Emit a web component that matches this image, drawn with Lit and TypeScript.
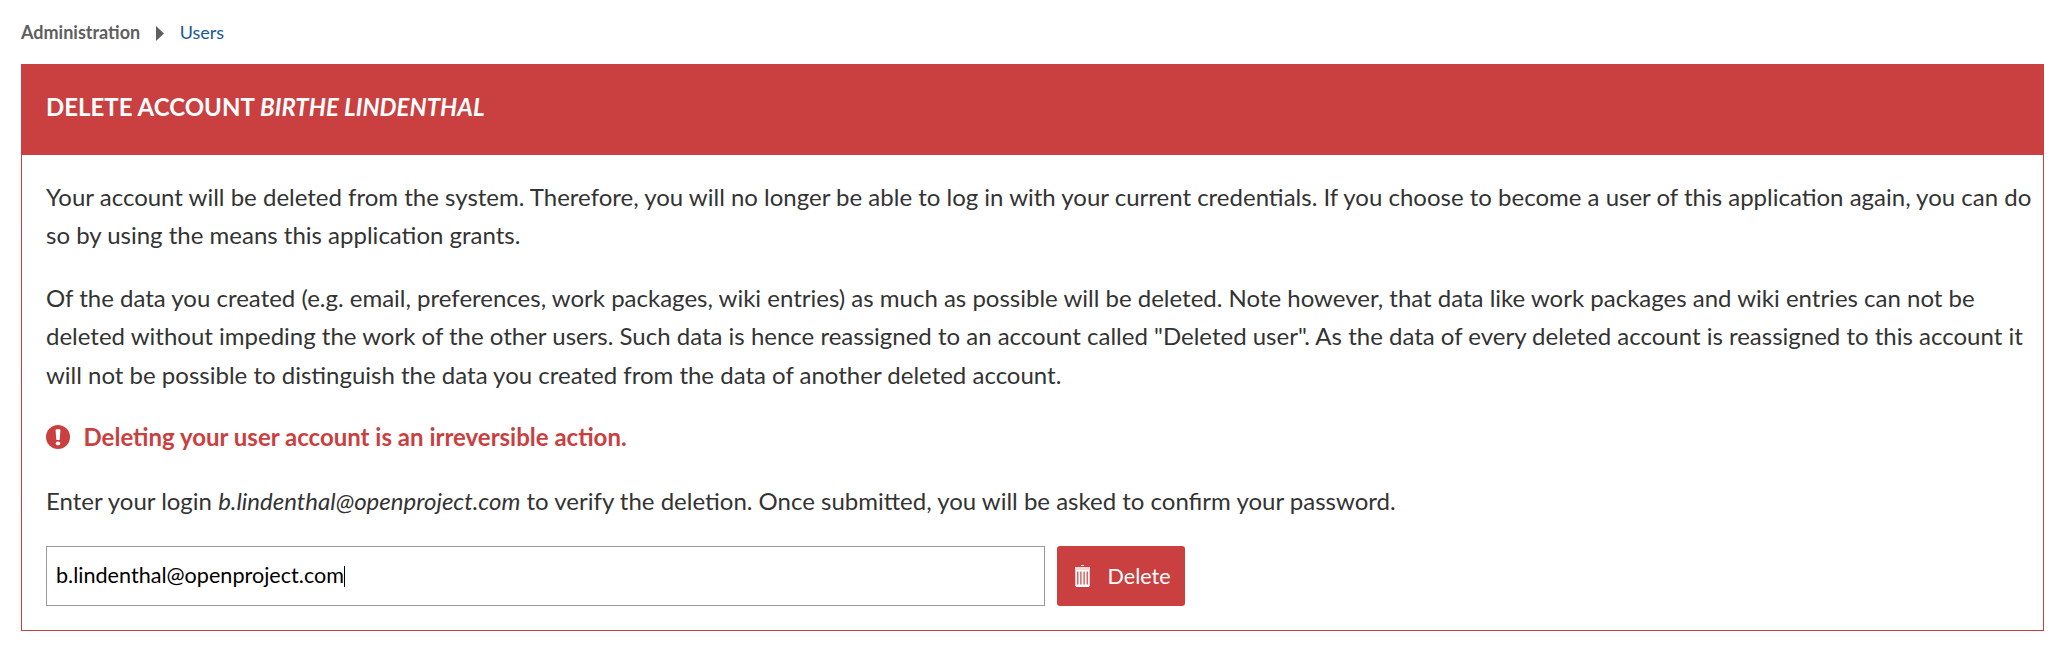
import { LitElement, html, css } from "lit";
import { customElement, property } from "lit/decorators.js";

@customElement("app-breadcrumb")
class AppBreadcrumb extends LitElement {
  static styles = css`
    :host { display: block; }
    .trail { display: flex; align-items: center; height: 24px; font-size: 18px; line-height: 24px; white-space: nowrap; }
    .root { color: #5f5f5f; font-weight: 700; }
    .arrow { width: 8px; height: 15px; margin: 2px 15.5px 0 16px; fill: #5f5f5f; }
    .link { color: #175a8e; text-decoration: none; }
  `;
  render() {
    return html`<nav class="trail">
      <span class="root">Administration</span>
      <svg class="arrow" viewBox="0 0 8 15"><path d="M0 0L8 7.5L0 15Z" /></svg>
      <a class="link">Users</a>
    </nav>`;
  }
}

@customElement("delete-account")
class DeleteAccount extends LitElement {
  @property() name = "Birthe Lindenthal";
  @property() login = "b.lindenthal@openproject.com";

  static styles = css`
    :host { display: block; }
    .panel { box-sizing: border-box; height: 567px; border: 1px solid #ca3f3f; background: #fff; }
    .header { box-sizing: border-box; height: 90px; padding: 23px 24px 0; background: #ca3f3f; color: #fff; }
    .title { margin: 0; font-size: 24px; line-height: 38px; font-weight: 700; text-transform: uppercase; white-space: nowrap; }
    .body { padding: 23px 0 0 24px; }
    .text { margin: 0 0 24px; font-size: 24px; line-height: 38.4px; color: #333; white-space: nowrap; }
    .text.prompt { margin-bottom: 25.2px; }
    .warning { display: flex; align-items: center; gap: 13.5px; margin-bottom: 26px; font-size: 24px; line-height: 38.4px; font-weight: 700; color: #ca3f3f; }
    .mark { width: 24px; height: 24px; }
    .form { display: flex; gap: 12px; height: 60px; }
    .field { box-sizing: border-box; display: flex; align-items: center; width: 999px; padding: 0 9px 2px; border: 1px solid #999; color: #000; font-size: 21.6px; line-height: 30px; }
    .caret { width: 1px; height: 21px; margin-top: 2px; background: #000; }
    .button { box-sizing: border-box; display: flex; align-items: center; width: 128px; padding: 0 0 0 18px; gap: 17.5px; border: 0; border-radius: 3px; background: #ca3f3f; color: #fff; font: 400 21.6px/30px Lato, sans-serif; }
    .bin { width: 15px; height: 22px; flex: none; }
  `;

  render() {
    return html`<section class="panel">
      <div class="header"><h3 class="title">Delete account <em>${this.name}</em></h3></div>
      <div class="body">
        <p class="text">Your account will be deleted from the system. Therefore, you will no longer be able to log in with your current credentials. If you choose to become a user of this application again, you can do<br />so by using the means this application grants.</p>
        <p class="text">Of the data you created (e.g. email, preferences, work packages, wiki entries) as much as possible will be deleted. Note however, that data like work packages and wiki entries can not be<br />deleted without impeding the work of the other users. Such data is hence reassigned to an account called "Deleted user". As the data of every deleted account is reassigned to this account it<br />will not be possible to distinguish the data you created from the data of another deleted account.</p>
        <div class="warning">
          <svg class="mark" viewBox="0 0 24 24"><circle cx="12" cy="12" r="12" fill="#ca3f3f" /><path d="M9.6 5.2q0-1 1-1h2.8q1 0 1 1l-.6 9q0 .8-.8.8h-2q-.8 0-.8-.8z" fill="#fff" /><ellipse cx="12" cy="18.4" rx="2.3" ry="1.9" fill="#fff" /></svg>
          <span>Deleting your user account is an irreversible action.</span>
        </div>
        <p class="text prompt">Enter your login <em>${this.login}</em> to verify the deletion. Once submitted, you will be asked to confirm your password.</p>
        <div class="form">
          <div class="field"><span>${this.login}</span><span class="caret"></span></div>
          <button class="button">
            <svg class="bin" viewBox="0 0 15 22"><path d="M6 0h3v1H6z" fill="#fff" /><path d="M0 2h15v3H0z" fill="#fff" opacity=".8" /><path fill-rule="evenodd" d="M.3 5h14.4v16l-1 1H1.3l-1-1zM2.2 6.5v13h1.2v-13zM5.3 6.5v13h1.2v-13zM8.5 6.5v13h1.2v-13zM11.6 6.5v13h1.2v-13z" fill="#fff" /></svg>
            <span>Delete</span>
          </button>
        </div>
      </div>
    </section>`;
  }
}

@customElement("app-root")
class AppRoot extends LitElement {
  static styles = css`
    :host { display: block; box-sizing: border-box; width: 2060px; height: 672px; padding: 20px 16px 0 21px; background: #fff; font-family: Lato, sans-serif; overflow: hidden; }
    .crumbs { margin-bottom: 20px; }
  `;
  render() {
    return html`<app-breadcrumb class="crumbs"></app-breadcrumb><delete-account></delete-account>`;
  }
}
